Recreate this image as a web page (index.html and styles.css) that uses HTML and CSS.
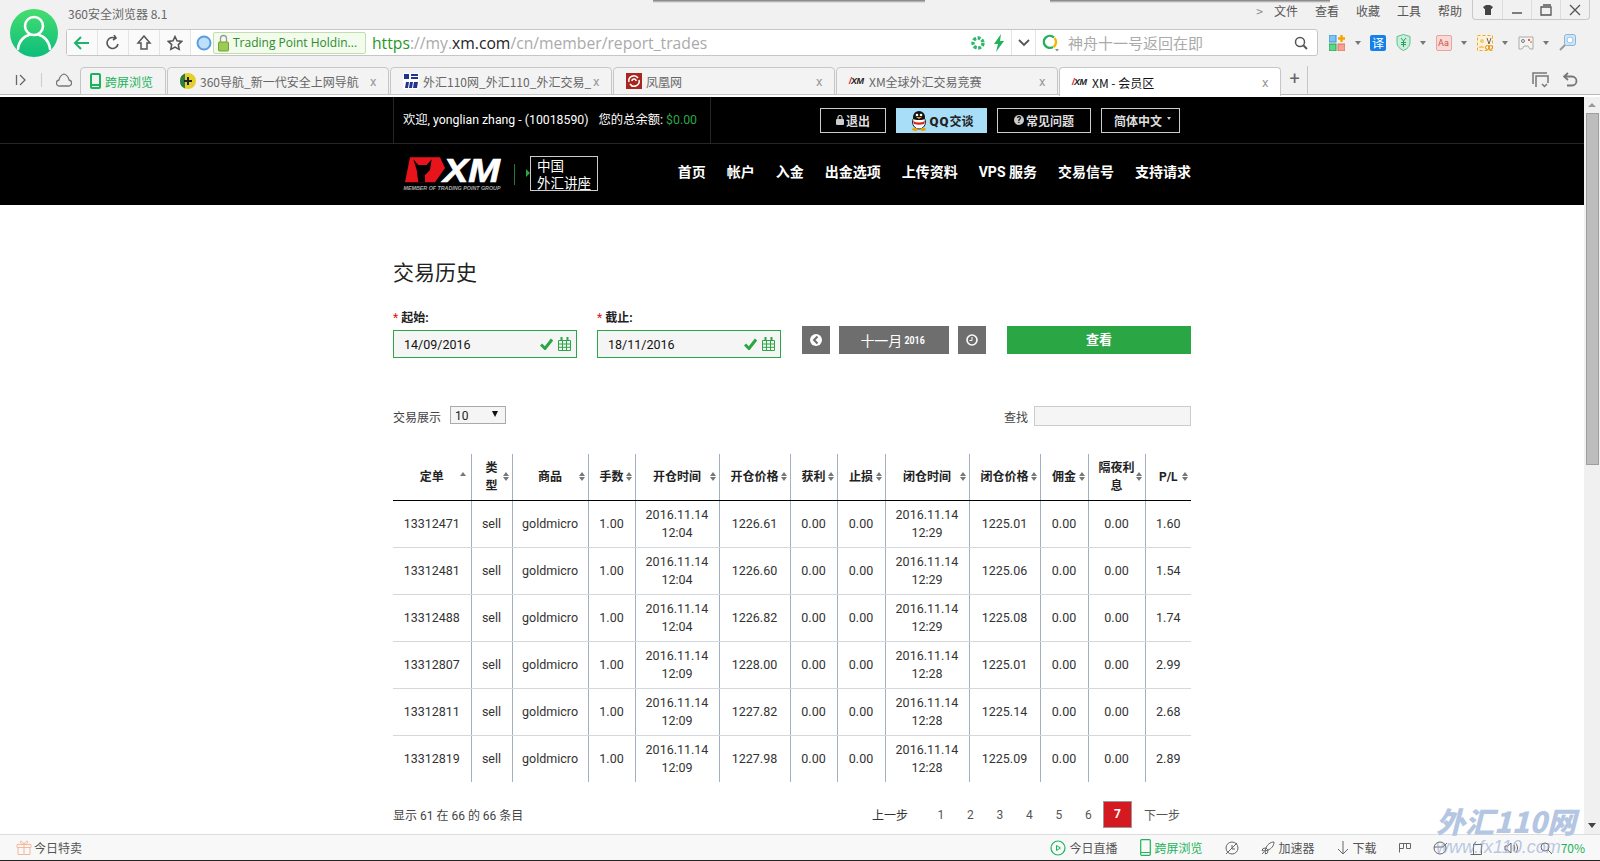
FILE: index.html
```html
<!DOCTYPE html>
<html lang="zh-CN">
<head>
    <meta charset="UTF-8">
    <title>XM - 会员区</title>
    <link rel="stylesheet" href="styles.css">
</head>
<body>
<div class="app">
    <div class="window-shadow shadow-one"></div>
    <div class="window-shadow shadow-two"></div>

    <!-- browser frame -->
    <div class="chrome">
        <div class="chrome-head">
            <div class="avatar">
                <svg width="48" height="48" viewBox="0 0 48 48"><circle cx="24" cy="17" r="9" fill="none" stroke="#fff" stroke-width="2.6"/><path d="M8 40c1-9 7-13 11-14M40 40c-1-9-7-13-11-14" fill="none" stroke="#fff" stroke-width="2.6" stroke-linecap="round"/></svg>
            </div>
            <div class="head-main">
                <div class="title-row">
                    <span class="app-title">360安全浏览器 8.1</span>
                    <div class="menu">
                        <span class="menu-arrow">&gt;</span>
                        <span>文件</span><span>查看</span><span>收藏</span><span>工具</span><span>帮助</span>
                    </div>
                    <div class="window-buttons">
                        <span class="win-btn"><svg width="12" height="12" viewBox="0 0 12 12"><path d="M1 3l3-2h4l3 2-1.5 2H9v6H3V5H2.500z" fill="#444"/></svg></span>
                        <span class="win-btn"><svg width="12" height="12" viewBox="0 0 12 12"><path d="M1 9h10" stroke="#555" stroke-width="1.500"/></svg></span>
                        <span class="win-btn"><svg width="12" height="12" viewBox="0 0 12 12"><path d="M1 3h10v8H1zM3 1h8" fill="none" stroke="#555" stroke-width="1.300"/></svg></span>
                        <span class="win-btn"><svg width="12" height="12" viewBox="0 0 12 12"><path d="M1 1l10 10M11 1L1 11" stroke="#555" stroke-width="1.300"/></svg></span>
                    </div>
                </div>
                <div class="address-row">
                    <div class="address-bar">
                        <span class="nav-btn"><svg width="18" height="16" viewBox="0 0 18 16"><path d="M8 2L2 8l6 6M2 8h14" fill="none" stroke="#1fb36b" stroke-width="2"/></svg></span>
                        <span class="nav-btn"><svg width="16" height="16" viewBox="0 0 16 16"><path d="M13 9a5.500 5.500 0 1 1-3-6M9 0l2 3-3 2" fill="none" stroke="#555" stroke-width="1.600"/></svg></span>
                        <span class="nav-btn"><svg width="16" height="16" viewBox="0 0 16 16"><path d="M8 1L2 8h3v6h6V8h3z" fill="none" stroke="#555" stroke-width="1.500"/></svg></span>
                        <span class="nav-btn"><svg width="16" height="16" viewBox="0 0 16 16"><path d="M8 1.500l2 4.300 4.700.6-3.400 3.200.9 4.700L8 12l-4.200 2.300.9-4.700L1.300 6.400 6 5.800z" fill="none" stroke="#555" stroke-width="1.500"/></svg></span>
                        <svg class="globe" width="16" height="18" viewBox="0 0 16 18"><circle cx="8" cy="9" r="6.500" fill="#bfe0fa" stroke="#5a9ee0" stroke-width="2"/></svg>
                        <span class="cert">
                            <svg width="11" height="18" viewBox="0 0 11 18"><path d="M2.500 8V4.500a3 3 0 0 1 6 0V8" fill="none" stroke="#999" stroke-width="1.300"/><rect x="0.500" y="8" width="10" height="9" rx="1" fill="#9ccb55" stroke="#6fa52e"/></svg>
                            Trading Point Holdin...
                        </span>
                        <span class="url"><span class="url-scheme">https</span>://my.<span class="url-host">xm.com</span>/cn/member/report_trades</span>
                        <svg class="speed" width="14" height="14" viewBox="0 0 14 14"><circle cx="7" cy="7" r="5" fill="none" stroke="#2fb86a" stroke-width="3.400" stroke-dasharray="3 1.500"/></svg>
                        <svg class="bolt" width="12" height="18" viewBox="0 0 12 18"><path d="M8 0L1 10h4l-2 8 8-11H7z" fill="#22b25d"/></svg>
                        <span class="drop-btn"><svg width="12" height="8" viewBox="0 0 12 8"><path d="M1 1l5 5 5-5" fill="none" stroke="#555" stroke-width="1.800"/></svg></span>
                        <svg class="search-logo" width="17" height="18" viewBox="0 0 17 18"><path d="M12 3.500A6 6 0 1 0 11 13" fill="none" stroke="#23b05a" stroke-width="2.400"/><path d="M11.500 13A6 6 0 0 0 12.500 4" fill="none" stroke="#f4b400" stroke-width="2.400"/><path d="M13 15l4 0-2 2.500z" fill="#888"/></svg>
                        <span class="search-hint">神舟十一号返回在即</span>
                        <svg width="14" height="14" viewBox="0 0 14 14"><circle cx="6" cy="6" r="4.500" fill="none" stroke="#555" stroke-width="1.500"/><path d="M9.500 9.500L13 13" stroke="#555" stroke-width="2"/></svg>
                    </div>
                    <div class="toolbar">
                        <svg width="16" height="16" viewBox="0 0 16 16"><rect width="7" height="7" fill="#7cc4f5" stroke="#3d8fd0"/><rect y="9" width="7" height="7" fill="#5ed68a" stroke="#24a455"/><rect x="9" y="9" width="7" height="7" fill="#f9a195" stroke="#e2705f"/><path d="M12.500 0v7M9 3.500h7" stroke="#f0a800" stroke-width="2.400"/></svg>
                        <span class="tool-arrow"></span>
                        <span class="translate-icon">译</span>
                        <svg width="15" height="17" viewBox="0 0 15 17"><path d="M7.500.500l6.500 2v6c0 4-3 6.500-6.500 8-3.500-1.500-6.500-4-6.500-8v-6z" fill="#c9efdb" stroke="#5cc08c"/><path d="M5 4l2.500 3L10 4M7.500 7v6M5 8.500h5M5 10.500h5" fill="none" stroke="#22a060"/></svg>
                        <span class="tool-arrow"></span>
                        <span class="aa-icon">Aa</span>
                        <span class="tool-arrow"></span>
                        <svg width="16" height="16" viewBox="0 0 16 16"><rect x=".5" y=".5" width="15" height="15" fill="#fdf1d6" stroke="#f0ab2a" stroke-dasharray="3 2"/><circle cx="5" cy="6" r="2" fill="#f3c77d"/><path d="M1.500 13c1-3 5-3 6 0z" fill="#f3c77d"/><path d="M10 3l2 6M14 3l-2 6" stroke="#666"/><circle cx="10.500" cy="12.500" r="2" fill="none" stroke="#e08a00"/><circle cx="13.500" cy="12.500" r="2" fill="none" stroke="#e08a00"/></svg>
                        <span class="tool-arrow"></span>
                        <svg width="16" height="14" viewBox="0 0 16 14"><path d="M1 1h14v12h-3l-2-3H6l-2 3H1z" fill="#f4f4f4" stroke="#aaa"/><circle cx="5" cy="5" r="1.500" fill="none" stroke="#777"/><rect x="10" y="3" width="2" height="2" fill="#e55"/><rect x="12" y="5" width="2" height="2" fill="#ea5"/></svg>
                        <span class="tool-arrow"></span>
                        <svg width="17" height="17" viewBox="0 0 17 17"><rect x="5.500" y=".5" width="11" height="11" rx="2" fill="#cfe4f6" stroke="#8ab6da"/><circle cx="11" cy="6" r="3" fill="#fff" stroke="#9cc3e2"/><path d="M6 11l-5 5" stroke="#9a9a9a" stroke-width="2"/></svg>
                    </div>
                </div>
            </div>
        </div>
        <div class="tab-row">
            <div class="tab-tools">
                <svg width="12" height="12" viewBox="0 0 12 12"><path d="M1.500 1v10M5 1l5 5-5 5" fill="none" stroke="#666" stroke-width="1.300"/></svg>
                <span class="tool-sep"></span>
                <svg width="16" height="14" viewBox="0 0 16 14"><path d="M4 13a3 3 0 0 1-1-6c.5-3 2-5 5-6 3 1 4.500 3 5 6a3 3 0 0 1-1 6z" fill="none" stroke="#777" stroke-width="1.300"/></svg>
            </div>
            <div class="tab tab-small">
                <svg width="11" height="16" viewBox="0 0 11 16"><rect x="1" y="1" width="9" height="14" rx="1" fill="none" stroke="#1cb45a" stroke-width="2"/><path d="M1 12h9" stroke="#1cb45a" stroke-width="2"/></svg>
                <span class="tab-green">跨屏浏览</span>
            </div>
            <div class="tab">
                <svg width="16" height="16" viewBox="0 0 16 16"><circle cx="8" cy="8" r="8" fill="#e4cf2b"/><path d="M0 8a8 8 0 0 0 5 7.500V.500A8 8 0 0 0 0 8z" fill="#2a7d43"/><path d="M8 4v8M4 8h8" stroke="#222" stroke-width="2"/></svg>
                <span class="tab-label">360导航_新一代安全上网导航</span>
                <span class="tab-close">x</span>
            </div>
            <div class="tab">
                <svg width="16" height="16" viewBox="0 0 16 16"><rect width="16" height="16" fill="#fff"/><path d="M1 1h5v5H1zM8 1h7v2H8zM8 4h7v2H8z" fill="#23348f"/><path d="M3 9h3l-1 6H2zM7 9h3l-1 6H6zM11 9h4l-1 6h-4z" fill="#23348f"/></svg>
                <span class="tab-label">外汇110网_外汇110_外汇交易_</span>
                <span class="tab-close">x</span>
            </div>
            <div class="tab">
                <svg width="16" height="16" viewBox="0 0 16 16"><rect width="16" height="16" fill="#a8261f"/><path d="M3 9a5 5 0 0 1 9-4M13 7a5 5 0 0 1-9 4M6 8a2 2 0 0 1 4 0" fill="none" stroke="#fff" stroke-width="1.500"/></svg>
                <span class="tab-label">凤凰网</span>
                <span class="tab-close">x</span>
            </div>
            <div class="tab">
                <span class="mini-xm"><i>/</i>XM</span>
                <span class="tab-label">XM全球外汇交易竞赛</span>
                <span class="tab-close">x</span>
            </div>
            <div class="tab tab-active">
                <span class="mini-xm"><i>/</i>XM</span>
                <span class="tab-label">XM - 会员区</span>
                <span class="tab-close">x</span>
            </div>
            <div class="tab-plus">+</div>
            <div class="tab-right">
                <svg width="17" height="16" viewBox="0 0 17 16"><path d="M1 12V1h14M4 15V4h12v7" fill="none" stroke="#777" stroke-width="1.500"/><path d="M10 12l2.500 2.500L15 12" fill="none" stroke="#777" stroke-width="1.500"/></svg>
                <svg width="15" height="16" viewBox="0 0 15 16"><path d="M5 1L1 4.500 5 8M1 4.500h8a4.500 4.500 0 0 1 0 9H4" fill="none" stroke="#777" stroke-width="1.800"/></svg>
            </div>
        </div>
    </div>

    <div class="viewport">
        <div class="page">
            <div class="top-bar">
                <div class="top-inner">
                    <div class="account">
                        <span>欢迎, yonglian zhang - (10018590)</span>
                        <span>您的总余额: <span class="balance">$0.00</span></span>
                    </div>
                    <div class="top-buttons">
                        <a class="top-btn btn-logout"><svg width="8" height="10" viewBox="0 0 8 10"><path d="M2 4V2.500a2 2 0 0 1 4 0V4" fill="none" stroke="#ccc" stroke-width="1.200"/><rect y="4" width="8" height="6" rx="1" fill="#ccc"/></svg>退出</a>
                        <a class="top-btn btn-qq">
                            <svg width="18" height="22" viewBox="0 0 18 22"><ellipse cx="9" cy="13" rx="6.500" ry="7" fill="#fff" stroke="#222"/><path d="M3 8a6 6 0 0 1 12 0c0 3-3 3-6 3s-6 0-6-3z" fill="#111"/><circle cx="7" cy="6" r="1.300" fill="#fff"/><circle cx="11" cy="6" r="1.300" fill="#fff"/><path d="M6 8h6l-3 2z" fill="#f0a000"/><path d="M3 12c4 2 8 2 12 0l-1 3c-3 1-7 1-10 0z" fill="#d8261c"/><ellipse cx="5" cy="20.500" rx="3" ry="1.400" fill="#f0a000"/><ellipse cx="13" cy="20.500" rx="3" ry="1.400" fill="#f0a000"/></svg>
                            <span><b>QQ</b>交谈</span>
                        </a>
                        <a class="top-btn btn-faq"><span class="faq-mark">?</span>常见问题</a>
                        <a class="top-btn btn-lang">简体中文<span class="caret"></span></a>
                    </div>
                </div>
            </div>
            <div class="nav-bar">
                <div class="nav-inner">
                    <svg class="xm-logo" width="100" height="37" viewBox="0 0 100 37">
                        <path d="M7 2.300h30L42 13 32 27.300H2z" fill="#e8141c"/>
                        <path d="M10.300 4.300L15.300 10h8.400l5-5.700L27 15l-5 5v7.300h-6.700L13.700 15z" fill="#000"/>
                        <text x="40" y="26.500" class="xm-mark" textLength="57" lengthAdjust="spacingAndGlyphs">XM</text>
                        <text x="0.500" y="34.500" class="xm-caption" textLength="97" lengthAdjust="spacingAndGlyphs">MEMBER OF TRADING POINT GROUP</text>
                    </svg>
                    <span class="logo-sep"></span>
                    <span class="logo-arrow"></span>
                    <div class="lecture-box">中国<br>外汇讲座</div>
                    <nav class="main-nav">
                        <a>首页</a><a>帐户</a><a>入金</a><a>出金选项</a><a>上传资料</a><a>VPS 服务</a><a>交易信号</a><a>支持请求</a>
                    </nav>
                </div>
            </div>

            <div class="content">
                <h1>交易历史</h1>
                <div class="date-form">
                    <div class="date-field">
                        <label><span class="req">*</span> 起始:</label>
                        <div class="date-input">
                            <span class="date-value">14/09/2016</span>
                            <svg width="13" height="12" viewBox="0 0 13 12"><path d="M1 6.500l4 4 7-9" fill="none" stroke="#2ba645" stroke-width="3"/></svg>
                            <svg width="13" height="14" viewBox="0 0 13 14"><path d="M.5 3.500h12v10H.5zM.5 7h12M.5 10.300h12M4.500 3.500v10M8.500 3.500v10" fill="none" stroke="#2ba645"/><path d="M3.500 0v3M9.500 0v3" stroke="#2ba645" stroke-width="2"/></svg>
                        </div>
                    </div>
                    <div class="date-field field-to">
                        <label><span class="req">*</span> 截止:</label>
                        <div class="date-input">
                            <span class="date-value">18/11/2016</span>
                            <svg width="13" height="12" viewBox="0 0 13 12"><path d="M1 6.500l4 4 7-9" fill="none" stroke="#2ba645" stroke-width="3"/></svg>
                            <svg width="13" height="14" viewBox="0 0 13 14"><path d="M.5 3.500h12v10H.5zM.5 7h12M.5 10.300h12M4.500 3.500v10M8.500 3.500v10" fill="none" stroke="#2ba645"/><path d="M3.500 0v3M9.500 0v3" stroke="#2ba645" stroke-width="2"/></svg>
                        </div>
                    </div>
                    <a class="date-btn btn-prev"><svg width="12" height="12" viewBox="0 0 12 12"><circle cx="6" cy="6" r="6" fill="#fff"/><path d="M7.500 2.500L4 6l3.500 3.500" fill="none" stroke="#6e6e6e" stroke-width="2"/></svg></a>
                    <a class="date-btn btn-month">十一月<span class="month-year">2016</span></a>
                    <a class="date-btn btn-next"><svg width="12" height="12" viewBox="0 0 12 12"><circle cx="6" cy="6" r="5" fill="none" stroke="#fff" stroke-width="1.600"/><path d="M6 3v3.500H3.500" fill="none" stroke="#fff"/></svg></a>
                    <a class="view-btn">查看</a>
                </div>

                <div class="table-tools">
                    <div class="page-size">交易展示
                        <span class="size-select">10<span class="size-arrow"></span></span>
                    </div>
                    <div class="table-search">查找 <span class="search-box"></span></div>
                </div>

                <table class="trades">
                    <colgroup>
                        <col class="c-order"><col class="c-type"><col class="c-item"><col class="c-lots"><col class="c-time"><col class="c-price"><col class="c-small"><col class="c-stop"><col class="c-time"><col class="c-price"><col class="c-stop"><col class="c-swap"><col class="c-pl">
                    </colgroup>
                    <thead>
                        <tr>
                            <th class="sort-asc">定单</th>
                            <th class="sortable">类<br>型</th>
                            <th class="sortable">商品</th>
                            <th class="sortable">手数</th>
                            <th class="sortable">开仓时间</th>
                            <th class="sortable">开仓价格</th>
                            <th class="sortable">获利</th>
                            <th class="sortable">止损</th>
                            <th class="sortable">闭仓时间</th>
                            <th class="sortable">闭仓价格</th>
                            <th class="sortable">佣金</th>
                            <th class="sortable">隔夜利<br>息</th>
                            <th class="sortable">P/L</th>
                        </tr>
                    </thead>
                    <tbody>
                        <tr><td>13312471</td><td>sell</td><td>goldmicro</td><td>1.00</td><td>2016.11.14<br>12:04</td><td>1226.61</td><td>0.00</td><td>0.00</td><td>2016.11.14<br>12:29</td><td>1225.01</td><td>0.00</td><td>0.00</td><td>1.60</td></tr>
                        <tr><td>13312481</td><td>sell</td><td>goldmicro</td><td>1.00</td><td>2016.11.14<br>12:04</td><td>1226.60</td><td>0.00</td><td>0.00</td><td>2016.11.14<br>12:29</td><td>1225.06</td><td>0.00</td><td>0.00</td><td>1.54</td></tr>
                        <tr><td>13312488</td><td>sell</td><td>goldmicro</td><td>1.00</td><td>2016.11.14<br>12:04</td><td>1226.82</td><td>0.00</td><td>0.00</td><td>2016.11.14<br>12:29</td><td>1225.08</td><td>0.00</td><td>0.00</td><td>1.74</td></tr>
                        <tr><td>13312807</td><td>sell</td><td>goldmicro</td><td>1.00</td><td>2016.11.14<br>12:09</td><td>1228.00</td><td>0.00</td><td>0.00</td><td>2016.11.14<br>12:28</td><td>1225.01</td><td>0.00</td><td>0.00</td><td>2.99</td></tr>
                        <tr><td>13312811</td><td>sell</td><td>goldmicro</td><td>1.00</td><td>2016.11.14<br>12:09</td><td>1227.82</td><td>0.00</td><td>0.00</td><td>2016.11.14<br>12:28</td><td>1225.14</td><td>0.00</td><td>0.00</td><td>2.68</td></tr>
                        <tr><td>13312819</td><td>sell</td><td>goldmicro</td><td>1.00</td><td>2016.11.14<br>12:09</td><td>1227.98</td><td>0.00</td><td>0.00</td><td>2016.11.14<br>12:28</td><td>1225.09</td><td>0.00</td><td>0.00</td><td>2.89</td></tr>
                    </tbody>
                </table>

                <div class="table-foot">
                    <span>显示 61 在 66 的 66 条目</span>
                    <div class="pager">
                        <a class="pager-prev">上一步</a>
                        <a>1</a><a>2</a><a>3</a><a>4</a><a>5</a><a>6</a>
                        <a class="pager-current">7</a>
                        <a class="pager-next">下一步</a>
                    </div>
                </div>
            </div>
        </div>
        <div class="scrollbar">
            <span class="scroll-up"></span>
            <span class="scroll-thumb"></span>
            <span class="scroll-down"></span>
        </div>
    </div>

    <!-- browser status bar -->
    <div class="status-bar">
        <div class="status-left">
            <svg width="16" height="15" viewBox="0 0 16 15"><path d="M1 4.500h14v3H1zM2 7.500h12v7H2zM8 4.500v10M8 4.500C4 4.500 3.500 1 5 1s3 3.500 3 3.500 1.500-3.500 3-3.500 1 3.500-3 3.500z" fill="none" stroke="#f6b898"/></svg>
            <span>今日特卖</span>
        </div>
        <div class="status-right">
            <span class="status-item"><svg width="16" height="16" viewBox="0 0 16 16"><circle cx="8" cy="8" r="7" fill="none" stroke="#1cb45a" stroke-width="1.200"/><path d="M6.500 5.500l4 2.500-4 2.500z" fill="none" stroke="#1cb45a"/></svg>今日直播</span>
            <span class="status-item status-green"><svg width="11" height="17" viewBox="0 0 11 17"><rect x=".7" y=".7" width="9.600" height="15.600" rx="1" fill="none" stroke="#1cb45a" stroke-width="1.200"/><path d="M1 13.500h9" stroke="#1cb45a"/></svg>跨屏浏览</span>
            <span class="status-item"><svg width="14" height="14" viewBox="0 0 14 14"><circle cx="7" cy="7" r="6" fill="none" stroke="#666"/><path d="M1 13L12 2M7 4v4h3" fill="none" stroke="#666"/></svg></span>
            <span class="status-item"><svg width="14" height="14" viewBox="0 0 14 14"><path d="M13 1c-4 0-7 3-8 6l2 2c3-1 6-4 6-8zM5 7L2 7.500 1 9.500l3 .5zM7 9l-.5 3-2 1-.5-3zM3 11l-2 2" fill="none" stroke="#666"/></svg>加速器</span>
            <span class="status-item"><svg width="12" height="14" viewBox="0 0 12 14"><path d="M6 0v13M1 8l5 5 5-5" fill="none" stroke="#666"/></svg>下载</span>
            <span class="status-item"><svg width="12" height="10" viewBox="0 0 12 10"><path d="M.5 9.500V.5h11v5h-4V.5h-3v5H.5" fill="none" stroke="#666"/></svg></span>
            <span class="status-item"><svg width="15" height="14" viewBox="0 0 15 14"><circle cx="7" cy="7" r="6" fill="none" stroke="#666"/><path d="M1 6h9l4-4" fill="none" stroke="#666"/></svg></span>
            <span class="status-item"><svg width="12" height="14" viewBox="0 0 12 14"><path d="M.5 13.500h11M3.500 13.500V3.500h8v10M3.500 3.500L6 .5" fill="none" stroke="#666"/></svg></span>
            <span class="status-item"><svg width="14" height="14" viewBox="0 0 14 14"><path d="M1 5h2.500L7 2v10L3.500 9H1zM10 4c1 2 1 4 0 6M12 2.500c2 3 2 6 0 9" fill="none" stroke="#666"/></svg></span>
            <span class="status-item status-zoom"><svg width="12" height="12" viewBox="0 0 12 12"><circle cx="5" cy="5" r="4" fill="none" stroke="#666"/><path d="M8 8l4 4" stroke="#666"/></svg><span class="status-green">70%</span></span>
        </div>
    </div>

    <div class="watermark">
        <div class="wm-big">外汇110网</div>
        <div class="wm-url">www.fx110.com</div>
    </div>
</div>
</body>
</html>
```

FILE: styles.css
```css
* {
    box-sizing: border-box;
}
body {
    margin: 0;
    font-family: Roboto, "Noto Sans CJK SC", sans-serif;
    font-size: 12px;
    color: #333;
    background-color: #fff;
}
a {
    color: inherit;
    text-decoration: none;
}
svg {
    flex-shrink: 0;
}
.app {
    position: relative;
    width: 1600px;
    height: 861px;
    overflow: hidden;
    display: flex;
    flex-direction: column;
}

/* shadows of the windows behind */
.window-shadow {
    position: absolute;
    top: 0;
    height: 3px;
    background: linear-gradient(#777, rgba(150, 150, 150, 0));
}
.shadow-one {
    left: 653px;
    width: 272px;
}
.shadow-two {
    left: 1050px;
    width: 280px;
}

/* browser frame */
.chrome {
    height: 97px;
    flex-shrink: 0;
    background-color: #f1f1f1;
    border-bottom: 2px solid #fff;
    font-family: "Noto Sans CJK SC", Roboto, sans-serif;
}
.chrome-head {
    height: 66px;
    display: flex;
}
.avatar {
    width: 48px;
    height: 48px;
    margin: 9px 8px 0 10px;
    border-radius: 50%;
    background: linear-gradient(#45dd70, #0cbd7c);
}
.head-main {
    flex: 1;
    display: flex;
    flex-direction: column;
}
.title-row {
    height: 29px;
    display: flex;
    padding-right: 10px;
}
.app-title {
    margin: 5px 0 0 2px;
    line-height: 18px;
    color: #666;
}
.menu {
    margin-left: auto;
    display: flex;
    gap: 17px;
    padding-top: 2px;
    line-height: 18px;
    color: #555;
}
.menu-arrow {
    margin-right: -6px;
    color: #888;
}
.window-buttons {
    margin-left: 10px;
    height: 20px;
    display: flex;
    border: 1px solid #c8c8c8;
    border-top: none;
    border-radius: 0 0 4px 4px;
}
.win-btn {
    width: 29px;
    display: flex;
    align-items: center;
    justify-content: center;
    border-left: 1px solid #dcdcdc;
}
.win-btn:first-child {
    border-left: none;
}
.address-row {
    display: flex;
    align-items: center;
}
.address-bar {
    width: 1252px;
    height: 27px;
    display: flex;
    align-items: center;
    background-color: #fff;
    border: 1px solid #c6c6c6;
    border-radius: 3px;
}
.nav-btn {
    width: 31px;
    height: 25px;
    display: flex;
    align-items: center;
    justify-content: center;
    border-right: 1px solid #e4e4e4;
    background-color: #fafafa;
}
.globe {
    margin-left: 5px;
}
.cert {
    width: 153px;
    height: 22px;
    margin-left: 1px;
    padding-left: 4px;
    display: flex;
    align-items: center;
    gap: 4px;
    background-color: #f2fbec;
    border: 1px solid #bfe0ac;
    border-radius: 2px;
    font-family: "Open Sans", sans-serif;
    font-size: 12px;
    color: #2b8c2b;
    white-space: nowrap;
}
.url {
    width: 599px;
    margin-left: 6px;
    font-family: "Open Sans", sans-serif;
    font-size: 15.700px;
    color: #aaa;
    white-space: nowrap;
}
.url-scheme {
    color: #1e9a1e;
}
.url-host {
    color: #222;
}
.bolt {
    margin-left: 8px;
}
.drop-btn {
    width: 25px;
    height: 25px;
    margin-left: 6px;
    display: flex;
    align-items: center;
    justify-content: center;
    border-left: 1px solid #e4e4e4;
    border-right: 1px solid #e4e4e4;
}
.search-logo {
    margin-left: 6px;
}
.search-hint {
    width: 226px;
    margin-left: 9px;
    font-size: 15px;
    color: #aaa;
    white-space: nowrap;
}
.toolbar {
    margin-left: 11px;
    display: flex;
    align-items: center;
    gap: 9.5px;
}
.tool-arrow {
    width: 0;
    height: 0;
    border-left: 3.5px solid transparent;
    border-right: 3.5px solid transparent;
    border-top: 4px solid #777;
}
.translate-icon {
    width: 16px;
    height: 16px;
    line-height: 16px;
    text-align: center;
    background-color: #1481ea;
    border-radius: 2px;
    color: #fff;
    font-size: 12px;
}
.aa-icon {
    width: 16px;
    height: 16px;
    line-height: 14px;
    text-align: center;
    background-color: #fbd9d6;
    border: 1px solid #e3a6a0;
    border-radius: 2px;
    color: #c9524a;
    font-family: Roboto, sans-serif;
    font-size: 9px;
}
.tab-row {
    height: 29px;
    display: flex;
    border-bottom: 1px solid #b9b9b9;
}
.tab-tools {
    width: 80px;
    display: flex;
    align-items: center;
    padding-left: 15px;
}
.tool-sep {
    width: 1px;
    height: 14px;
    margin: 0 14px 0 14px;
    background-color: #ccc;
}
.tab {
    width: 222px;
    height: 28px;
    margin: 1px 1px 0 0;
    padding-left: 12px;
    display: flex;
    align-items: center;
    gap: 4px;
    background-color: #f3f3f3;
    border: 1px solid #c6c6c6;
    border-radius: 4px 4px 0 0;
    color: #666;
    white-space: nowrap;
}
.tab-small {
    width: 86px;
    padding-left: 9px;
}
.tab-green {
    color: #1cb45a;
}
.tab-label {
    flex: 1;
    min-width: 0;
}
.tab-close {
    width: 18px;
    color: #999;
    font-family: Roboto, sans-serif;
    font-size: 13px;
}
.tab-active {
    height: 29px;
    background-color: #fff;
    border-bottom: none;
    color: #111;
    position: relative;
    z-index: 1;
}
.mini-xm {
    width: 16px;
    font-family: "Liberation Sans", sans-serif;
    font-size: 9px;
    font-weight: bold;
    font-style: italic;
    color: #222;
    letter-spacing: -0.5px;
}
.mini-xm i {
    color: #d8141c;
}
.tab-plus {
    width: 26px;
    border-right: 1px solid #c6c6c6;
    text-align: center;
    font-family: Roboto, sans-serif;
    font-size: 18px;
    line-height: 26px;
    color: #666;
}
.tab-right {
    margin-left: auto;
    padding-right: 22px;
    display: flex;
    align-items: center;
    gap: 14px;
}

/* page area */
.viewport {
    flex: 1;
    min-height: 0;
    display: flex;
}
.page {
    flex: 1;
    min-width: 0;
    overflow: hidden;
    background-color: #fff;
}
.top-bar {
    height: 47px;
    background-color: #000;
    border-bottom: 1px solid #262626;
}
.top-inner {
    width: 798px;
    height: 46px;
    margin: 0 auto;
    display: flex;
    align-items: center;
}
.account {
    width: 318px;
    height: 46px;
    padding: 0 0 2px 9px;
    display: flex;
    align-items: center;
    gap: 10px;
    border-left: 1px solid #262626;
    border-right: 1px solid #262626;
    color: #fff;
    font-size: 12.300px;
    white-space: nowrap;
}
.balance {
    color: #28a745;
}
.top-buttons {
    margin-left: auto;
    padding-right: 11px;
    display: flex;
    gap: 10px;
}
.top-btn {
    height: 25px;
    display: flex;
    align-items: center;
    justify-content: center;
    gap: 2px;
    border: 1px solid #ccc;
    color: #ddd;
    font-weight: bold;
}
.btn-logout {
    width: 66px;
}
.btn-qq {
    width: 91px;
    background-color: #a8def7;
    border: none;
    color: #222;
}
.btn-qq b {
    letter-spacing: 1px;
    font-size: 13px;
}
.btn-faq {
    width: 94px;
}
.faq-mark {
    width: 10px;
    height: 10px;
    line-height: 10px;
    text-align: center;
    border-radius: 50%;
    background-color: #ccc;
    color: #000;
    font-size: 9px;
}
.btn-lang {
    width: 79px;
    gap: 5px;
    padding-left: 4px;
}
.caret {
    width: 0;
    height: 0;
    margin-bottom: 3px;
    border-left: 2.5px solid transparent;
    border-right: 2.5px solid transparent;
    border-top: 3px solid #ccc;
}
.nav-bar {
    height: 61px;
    background-color: #000;
}
.nav-inner {
    width: 798px;
    height: 61px;
    margin: 0 auto;
    padding-left: 10px;
    display: flex;
    align-items: flex-start;
}
.xm-logo {
    margin-top: 11px;
    overflow: visible;
}
.xm-mark {
    font-family: "Liberation Sans", sans-serif;
    font-size: 33px;
    font-weight: bold;
    font-style: italic;
    fill: #fff;
    stroke: #fff;
    stroke-width: 0.7px;
}
.xm-caption {
    font-family: "Liberation Sans", sans-serif;
    font-size: 5.500px;
    font-weight: bold;
    font-style: italic;
    fill: #aaa;
}
.logo-sep {
    width: 1px;
    height: 21px;
    margin: 20px 0 0 11px;
    background-color: #1d7a3a;
}
.logo-arrow {
    width: 0;
    height: 0;
    margin: 25px 0 0 11px;
    border-top: 4px solid transparent;
    border-bottom: 4px solid transparent;
    border-left: 4px solid #28a745;
}
.lecture-box {
    width: 68px;
    height: 35px;
    margin-top: 12px;
    padding: 0 0 0 6px;
    border: 1px solid #ccc;
    color: #fff;
    font-family: "Noto Sans CJK SC", sans-serif;
    font-size: 13.500px;
    line-height: 16.500px;
    white-space: nowrap;
}
.main-nav {
    margin-left: auto;
    display: flex;
    gap: 21px;
    padding-top: 18px;
    color: #fff;
    font-family: Roboto, "Noto Sans CJK SC", sans-serif;
    font-size: 14px;
    font-weight: bold;
    line-height: 20px;
    white-space: nowrap;
}

/* content */
.content {
    width: 798px;
    margin: 0 auto;
}
.content h1 {
    margin: 52px 0 0;
    height: 32px;
    line-height: 32px;
    font-size: 21px;
    font-weight: normal;
    color: #222;
}
.date-form {
    margin-top: 21px;
    display: flex;
    align-items: flex-start;
}
.date-field {
    width: 184px;
}
.field-to {
    margin-left: 20px;
}
.date-field label {
    display: block;
    height: 16px;
    margin-bottom: 4px;
    line-height: 16px;
    font-weight: bold;
    color: #222;
}
.req {
    color: #d51920;
    font-weight: normal;
}
.date-input {
    height: 28px;
    padding: 0 5px 0 10px;
    display: flex;
    align-items: center;
    gap: 5px;
    background-color: #f5f5f5;
    border: 1px solid #2ba645;
}
.date-value {
    flex: 1;
    font-size: 12.500px;
    color: #111;
}
.date-btn {
    height: 28px;
    margin-top: 16px;
    display: flex;
    align-items: center;
    justify-content: center;
    background-color: #6e6e6e;
    color: #fff;
}
.btn-prev {
    width: 28px;
    margin-left: 21px;
}
.btn-month {
    width: 110px;
    margin-left: 9px;
    font-size: 14px;
}
.month-year {
    font-size: 11px;
    font-weight: bold;
    transform: scaleX(0.8);
}
.btn-next {
    width: 28px;
    margin-left: 9px;
}
.view-btn {
    width: 184px;
    height: 28px;
    margin: 16px 0 0 auto;
    line-height: 28px;
    text-align: center;
    background-color: #2ba645;
    color: #fff;
    font-size: 13px;
    font-weight: bold;
}
.table-tools {
    height: 20px;
    margin-top: 48px;
    display: flex;
    justify-content: space-between;
    color: #444;
}
.page-size {
    display: flex;
    align-items: center;
    gap: 9px;
}
.size-select {
    position: relative;
    width: 56px;
    height: 18px;
    margin-top: -2px;
    padding-left: 4px;
    line-height: 18px;
    background-color: #f5f5f5;
    border: 1px solid #aaa;
    color: #222;
}
.size-arrow {
    position: absolute;
    top: 4px;
    right: 7px;
    width: 0;
    height: 0;
    border-left: 3px solid transparent;
    border-right: 3px solid transparent;
    border-top: 6px solid #111;
}
.table-search {
    display: flex;
    align-items: center;
    gap: 6px;
}
.search-box {
    width: 157px;
    height: 20px;
    background-color: #f5f5f5;
    border: 1px solid #ccc;
}

/* trades table */
.trades {
    width: 798px;
    margin-top: 28px;
    table-layout: fixed;
    border-collapse: collapse;
    font-size: 12.500px;
    line-height: 18px;
    text-align: center;
}
.c-order { width: 78px; }
.c-type { width: 41px; }
.c-item { width: 76px; }
.c-lots { width: 47px; }
.c-time { width: 84px; }
.c-price { width: 71px; }
.c-small { width: 47px; }
.c-stop { width: 48px; }
.c-swap { width: 57px; }
.c-pl { width: 46px; }
.trades th {
    position: relative;
    height: 46px;
    padding: 0;
    border-right: 1px solid #a3b0c2;
    border-bottom: 1px solid #000;
    color: #222;
    font-size: 12px;
    font-weight: bold;
}
.trades td {
    height: 47px;
    padding: 0;
    border-right: 1px solid #a3b0c2;
    border-bottom: 1px solid #d3d8de;
    color: #333;
}
.trades th:last-child,
.trades td:last-child {
    border-right: none;
}
.trades tr:last-child td {
    border-bottom: none;
}
.sortable::before,
.sortable::after,
.sort-asc::before {
    content: "";
    position: absolute;
    right: 3px;
    width: 0;
    height: 0;
    border-left: 3.5px solid transparent;
    border-right: 3.5px solid transparent;
}
.sortable::before {
    top: 18px;
    border-bottom: 4px solid #777;
}
.sortable::after {
    top: 23px;
    border-top: 4px solid #777;
}
.sort-asc::before {
    top: 18px;
    right: 5px;
    border-bottom: 4px solid #777;
}
.table-foot {
    height: 27px;
    margin-top: 19px;
    display: flex;
    align-items: center;
    justify-content: space-between;
    color: #444;
}
.pager {
    display: flex;
    align-items: center;
    color: #555;
}
.pager a {
    width: 29.500px;
    text-align: center;
}
.pager .pager-prev {
    width: 36px;
    margin-right: 18px;
    color: #333;
    white-space: nowrap;
}
.pager .pager-current {
    width: 29px;
    height: 27px;
    line-height: 25px;
    background-color: #d51920;
    border: 1px solid #999;
    color: #fff;
    font-weight: bold;
}
.pager .pager-next {
    width: 36px;
    margin: 0 11px 0 12px;
    white-space: nowrap;
}

/* scrollbar */
.scrollbar {
    width: 16px;
    display: flex;
    flex-direction: column;
    align-items: center;
    background-color: #f0f0f0;
}
.scroll-up,
.scroll-down {
    width: 0;
    height: 0;
    border-left: 4px solid transparent;
    border-right: 4px solid transparent;
}
.scroll-up {
    margin-top: 6px;
    border-bottom: 4px solid #999;
}
.scroll-thumb {
    width: 13px;
    height: 352px;
    margin-top: 6px;
    background-color: #bdbdbd;
    border: 1px solid #9e9e9e;
}
.scroll-down {
    margin-top: auto;
    margin-bottom: 6px;
    border-top: 5px solid #444;
}

/* status bar */
.status-bar {
    height: 27px;
    flex-shrink: 0;
    display: flex;
    align-items: center;
    justify-content: space-between;
    padding: 0 15px 0 16px;
    background-color: #f8f8f8;
    border-top: 1px solid #ddd;
    border-bottom: 1px solid #222;
    font-family: "Noto Sans CJK SC", sans-serif;
    color: #555;
}
.status-left {
    display: flex;
    align-items: center;
    gap: 2px;
}
.status-right {
    display: flex;
    align-items: center;
    gap: 22px;
}
.status-item {
    display: flex;
    align-items: center;
    gap: 4px;
    white-space: nowrap;
}
.status-green {
    color: #1cb45a;
}
.status-zoom {
    gap: 9px;
}

/* watermark over the corner of the page */
.watermark {
    position: absolute;
    left: 1436px;
    top: 803px;
    font-family: "Liberation Sans", sans-serif;
    font-style: italic;
    font-weight: bold;
    white-space: nowrap;
}
.wm-big {
    font-family: "Noto Sans CJK SC", sans-serif;
    font-size: 29px;
    font-weight: 900;
    line-height: 34px;
    color: #b4c6e2;
}
.wm-url {
    font-size: 18px;
    font-weight: normal;
    line-height: 20px;
    color: rgba(140, 165, 210, 0.6);
}
```
